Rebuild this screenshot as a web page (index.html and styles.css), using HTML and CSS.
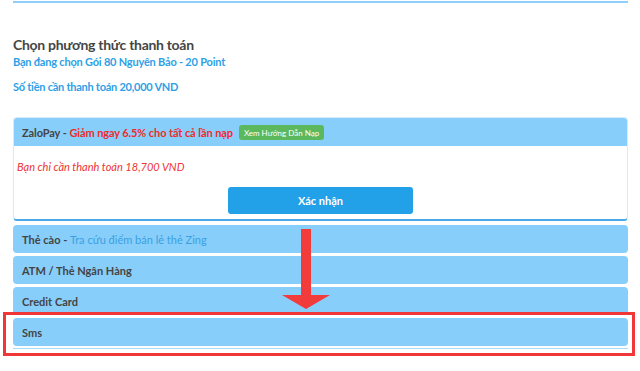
FILE: index.html
```html
<!DOCTYPE html>
<html lang="vi">
<head>
<meta charset="utf-8">
<title>Chọn phương thức thanh toán</title>
<link rel="stylesheet" href="styles.css">
</head>
<body>
<div class="page">
  <div class="topline"></div>
  <h2 class="title">Chọn phương thức thanh toán</h2>
  <p class="info">Bạn đang chọn Gói 80 Nguyên Bảo - 20 Point</p>
  <p class="info info-2">Số tiền cần thanh toán 20,000 VND</p>

  <div class="methods">
    <div class="panel panel-open">
      <div class="panel-head">
        <span class="name">ZaloPay</span><span class="sep"> - </span><span class="promo">Giảm ngay 6.5% cho tất cả lần nạp</span>
        <span class="badge">Xem Hướng Dẫn Nạp</span>
      </div>
      <div class="panel-body">
        <p class="note">Bạn chỉ cần thanh toán 18,700 VND</p>
        <div class="actions"><button class="btn">Xác nhận</button></div>
      </div>
    </div>
    <div class="panel">
      <div class="panel-head"><span class="name">Thẻ cào</span><span class="sep"> - </span><span class="link">Tra cứu điểm bán lẻ thẻ Zing</span></div>
    </div>
    <div class="panel">
      <div class="panel-head"><span class="name">ATM / Thẻ Ngân Hàng</span></div>
    </div>
    <div class="panel">
      <div class="panel-head"><span class="name">Credit Card</span></div>
    </div>
    <div class="panel panel-last">
      <div class="panel-head"><span class="name">Sms</span></div>
    </div>
  </div>
</div>

<div class="arrow">
  <div class="arrow-shaft"></div>
  <svg class="arrow-head" width="48" height="14" viewBox="0 0 48 14"><polygon points="0,0 48,0 24,14" fill="#f23b3b"/></svg>
</div>
<div class="highlight"></div>
</body>
</html>
```

FILE: styles.css
```css
html, body {
  margin: 0;
  padding: 0;
  background: #ffffff;
}

body {
  font-family: "Lato", "Noto Sans", sans-serif;
  color: #444;
  width: 640px;
  height: 371px;
  overflow: hidden;
  position: relative;
}

.page {
  padding: 1px 12px 0 13px;
}

.topline {
  height: 2px;
  background: #8ed0fb;
}

.title {
  margin: 33px 0 0;
  font-size: 14px;
  line-height: 18px;
  font-weight: 700;
  letter-spacing: -0.3px;
  color: #454545;
}

.info {
  margin: 1px 0 0;
  font-size: 11px;
  line-height: 14px;
  font-weight: 700;
  letter-spacing: -0.2px;
  color: #2e9fe6;
}

.info-2 {
  margin-top: 11px;
  letter-spacing: -0.25px;
}

.methods {
  margin-top: 23px;
  display: flex;
  flex-direction: column;
  gap: 3px;
}

.panel {
  border-radius: 4px;
  background: #fff;
}

.panel-head {
  height: 28px;
  display: flex;
  align-items: center;
  padding: 0 9px;
  background: #87cefa;
  border-radius: 4px;
  font-size: 11px;
  font-weight: 700;
  color: #444;
  white-space: pre;
}

.panel-open {
  border: 1px solid #d5ecfc;
  border-bottom: 2px solid #4aa8e8;
  border-radius: 4px;
  margin-bottom: 1px;
}

.panel-open .panel-head {
  height: 28px;
  border-radius: 3px 3px 0 0;
  padding-left: 8px;
  letter-spacing: -0.1px;
}

.promo {
  color: #ee2b2b;
}

.link {
  color: #3aa0e2;
  font-weight: 400;
}

.badge {
  margin-left: 6px;
  background: #5cb85c;
  color: #fff;
  font-size: 8px;
  font-weight: 400;
  letter-spacing: 0;
  padding: 3px 5px 2px;
  border-radius: 3px;
  line-height: 10px;
}

.panel-body {
  padding: 14px 0 5px 3px;
}

.note {
  margin: 0;
  font-size: 11px;
  line-height: 14px;
  font-style: italic;
  color: #ee3434;
}

.actions {
  display: flex;
  justify-content: center;
  margin-top: 13px;
  padding-right: 3px;
}

.btn {
  width: 185px;
  height: 27px;
  border: none;
  border-radius: 3px;
  background: #22a0e8;
  color: #fff;
  font-family: inherit;
  font-size: 11px;
  font-weight: 700;
}

.panel-last {
  border-bottom: 1px solid #a9dbfb;
  padding-bottom: 2px;
  border-radius: 4px 4px 0 0;
}

.arrow {
  position: absolute;
  left: 282px;
  top: 229px;
  width: 48px;
  display: flex;
  flex-direction: column;
  align-items: center;
}

.arrow-shaft {
  width: 10px;
  height: 66px;
  background: #f23b3b;
}

.arrow-head {
  display: block;
}

.highlight {
  position: absolute;
  left: 3px;
  top: 312px;
  width: 626px;
  height: 38px;
  border: 3px solid #f03636;
}
```
